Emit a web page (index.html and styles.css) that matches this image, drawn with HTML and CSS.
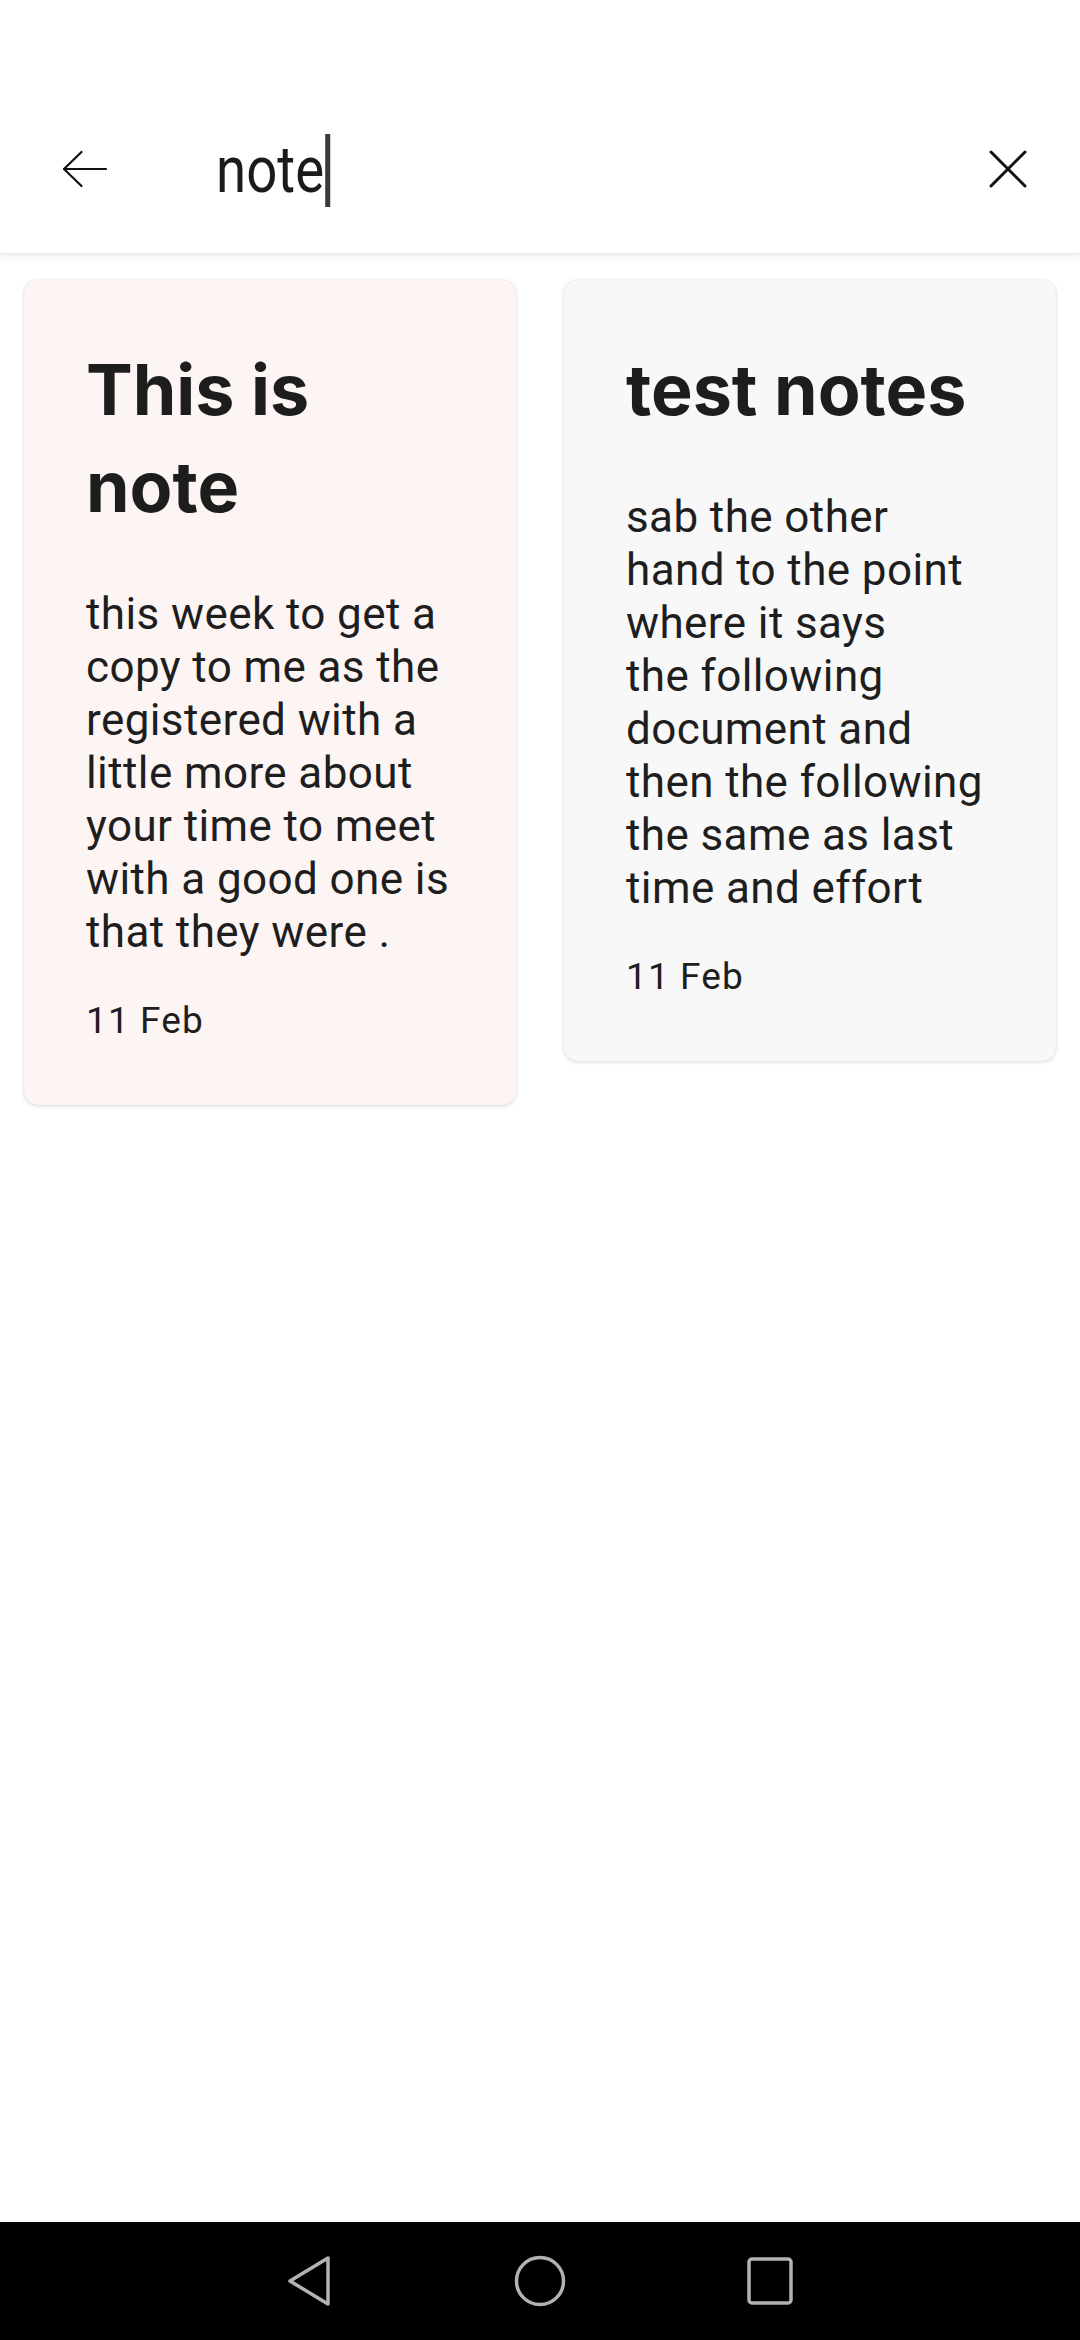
FILE: index.html
```html
<!DOCTYPE html>
<html lang="en">
<head>
<meta charset="utf-8">
<title>Search notes</title>
<link rel="stylesheet" href="styles.css">
</head>
<body>
<div class="screen">
  <header class="appbar">
    <div class="statusbar"></div>
    <div class="toolbar">
      <button class="icon-btn back-btn" aria-label="Back">
        <svg width="46" height="38" viewBox="0 0 46 38" fill="none" stroke="#111" stroke-width="2.2" stroke-linecap="round" stroke-linejoin="round">
          <path d="M44 19H2"/>
          <path d="M19.5 2L2 19l17.5 17"/>
        </svg>
      </button>
      <div class="search">
        <span class="query">note<span class="caret"></span></span>
      </div>
      <button class="icon-btn close-btn" aria-label="Clear">
        <svg width="38" height="38" viewBox="0 0 38 38" fill="none" stroke="#111" stroke-width="3" stroke-linecap="round">
          <path d="M2 2L36 36"/>
          <path d="M36 2L2 36"/>
        </svg>
      </button>
    </div>
  </header>

  <main class="grid">
    <article class="card card-rose">
      <h2 class="card-title">This is note</h2>
      <p class="card-body">this week to get a copy to me as the registered with a little more about your time to meet with a good one is that they were .</p>
      <p class="card-date">11 Feb</p>
    </article>
    <article class="card card-grey">
      <h2 class="card-title">test notes</h2>
      <p class="card-body">sab the other hand to the point where it says
the following document and then the following the same as last time and effort</p>
      <p class="card-date">11 Feb</p>
    </article>
  </main>

  <nav class="navbar">
    <div class="nav-slot">
      <svg width="46" height="52" viewBox="0 0 46 52" fill="none" stroke="#b3b3b3" stroke-width="3.5" stroke-linejoin="round">
        <path d="M41 3V49L3 26Z"/>
      </svg>
    </div>
    <div class="nav-slot">
      <svg width="54" height="54" viewBox="0 0 54 54" fill="none" stroke="#b3b3b3" stroke-width="3.5">
        <circle cx="27" cy="27" r="23.5"/>
      </svg>
    </div>
    <div class="nav-slot">
      <svg width="48" height="50" viewBox="0 0 48 50" fill="none" stroke="#b3b3b3" stroke-width="3.5">
        <rect x="3" y="3" width="42" height="44" rx="3"/>
      </svg>
    </div>
  </nav>
</div>
</body>
</html>
```

FILE: styles.css
```css
* {
  box-sizing: border-box;
}

html, body {
  margin: 0;
  padding: 0;
  background: #ffffff;
}

body {
  font-family: Roboto, "Noto Sans", "Liberation Sans", sans-serif;
  color: #1f1f1f;
}

.screen {
  width: 1080px;
  height: 2340px;
  display: flex;
  flex-direction: column;
  background: #ffffff;
  overflow: hidden;
}

.appbar {
  position: relative;
  z-index: 1;
  background: #ffffff;
  box-shadow: 0 2px 10px rgba(0, 0, 0, 0.09), 0 1px 2px rgba(0, 0, 0, 0.05);
}

.statusbar {
  height: 84px;
}

.toolbar {
  height: 169px;
  display: flex;
  align-items: center;
}

.icon-btn {
  border: 0;
  background: transparent;
  padding: 0;
  margin: 0;
  height: 169px;
  display: flex;
  align-items: center;
  justify-content: center;
}

.back-btn {
  width: 169px;
}

.close-btn {
  width: 145px;
}

.search {
  flex: 1;
  padding-left: 47px;
  display: flex;
  align-items: center;
}

.query {
  display: inline-flex;
  align-items: center;
  font-family: Roboto, "Noto Sans", sans-serif;
  font-size: 65px;
  line-height: 1;
  color: #1b1b1b;
  transform: scaleX(0.84);
  transform-origin: left center;
  padding-top: 4px;
}

.caret {
  display: inline-block;
  width: 6px;
  height: 73px;
  margin-left: 1px;
  background: #3a3a3a;
}

.grid {
  flex: 1;
  display: grid;
  grid-template-columns: 1fr 1fr;
  column-gap: 48px;
  align-items: start;
  padding: 27px 24px 0;
}

.card {
  border-radius: 14px;
  padding: 61px 65px 62px 62px;
  box-shadow: 0 1px 4px rgba(0, 0, 0, 0.14), 0 0 1px rgba(0, 0, 0, 0.12);
}

.card-rose {
  background: #fdf5f4;
}

.card-grey {
  background: #f8f8f8;
}

.card-title {
  margin: 0;
  font-family: Inter, "Noto Sans", sans-serif;
  font-weight: 700;
  font-size: 70px;
  line-height: 97px;
  color: #1d1d1d;
}

.card-body {
  margin: 53px 0 0;
  font-size: 44px;
  line-height: 53px;
  letter-spacing: 0.4px;
  color: #1e1e1e;
  white-space: pre-line;
}

.card-date {
  margin: 40px 0 0;
  font-size: 37px;
  line-height: 44px;
  letter-spacing: 1.1px;
  color: #1e1e1e;
}

.navbar {
  height: 118px;
  background: #000000;
  display: flex;
  justify-content: center;
  align-items: center;
}

.nav-slot {
  width: 230px;
  display: flex;
  justify-content: center;
  align-items: center;
}
```
